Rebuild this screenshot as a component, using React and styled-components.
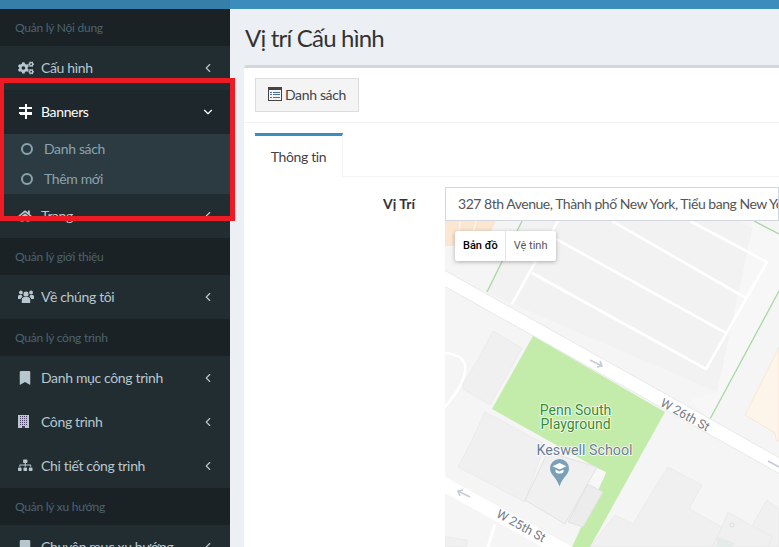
import React from 'react';
import styled, { createGlobalStyle } from 'styled-components';
import { FaCogs, FaHome, FaBookmark, FaSitemap } from 'react-icons/fa';
import { ChevronLeft, ChevronDown } from 'lucide-react';

// -----------------------------------------------------------------------------------------
// ---------------------------------------- Icons ------------------------------------------
// -----------------------------------------------------------------------------------------
const font = '"Lato", "Noto Sans", sans-serif';

const GlobalStyle = createGlobalStyle`
  html, body {
    margin: 0;
    width: 779px;
    height: 547px;
    overflow: hidden;
    font-family: ${font};
  }
  * {
    box-sizing: border-box;
  }
`;

const SignsIcon = () => (
  <svg width="15" height="15" viewBox="0 0 15 15" fill="currentColor" shapeRendering="crispEdges">
    <path d="M6.500 0h2v15h-2z" />
    <path d="M1 3h12l1.500 1-1.500 1H1z" />
    <path d="M14 8H2L.5 9 2 10.500h12z" />
  </svg>
);

const UsersIcon = () => (
  <svg width="16" height="13" viewBox="0 0 16 13" fill="currentColor">
    <circle cx="8" cy="4" r="2.600" />
    <path d="M3.800 13V9.500C3.800 8 5 7 6.300 7h3.400c1.300 0 2.500 1 2.500 2.500V13z" />
    <circle cx="2.900" cy="2.500" r="1.900" />
    <circle cx="13.100" cy="2.500" r="1.900" />
    <path d="M0 9V6.500C0 5.500.8 5 1.600 5h2.100c.1 .9.6 1.400 1 1.700C3.500 7.200 2.900 8 2.800 9z" />
    <path d="M16 9V6.500C16 5.500 15.200 5 14.400 5h-2.100c-.1 .9-.6 1.400-1 1.700 1.200 .5 1.800 1.300 1.900 2.300z" />
  </svg>
);

const BuildingIcon = () => (
  <svg width="11" height="13" viewBox="0 0 11 13" shapeRendering="crispEdges">
    <rect width="11" height="13" fill="currentColor" />
    <g fill="#4a3f63">
      {[1, 3, 5, 7, 9].map((y) =>
        [2, 4, 6, 8].map((x) => <rect key={`${x}-${y}`} x={x} y={y} width="1" height="1" />)
      )}
      <rect x="4" y="10.500" width="3" height="2.500" />
    </g>
  </svg>
);

const ListIcon = () => (
  <svg width="14" height="14" viewBox="0 0 14 14" fill="none" shapeRendering="crispEdges">
    <rect x="0.500" y="0.500" width="13" height="13" stroke="#444" />
    <path d="M1 1h12v2H1z" fill="#444" />
    <path d="M2 5h2M5 5h7M2 7.500h2M5 7.500h7M2 10h2M5 10h7" stroke="#4d6f9c" />
  </svg>
);

const MapArt = () => (
  <MapSvg viewBox="445 221 334 326">
    <rect x="445" y="221" width="334" height="326" fill="#f5f5f5" />

    {/* parcels north of 26th */}
    <polygon points="522,221 739,221 779,243 779,283 717,392 487,293" fill="#f2f2f2" />
    <polygon points="754,221 779,234 779,291 710,419 690,400 717,392" fill="#f7f7f7" />
    <g fill="none" stroke="#fff" strokeWidth="2.600" strokeLinejoin="round">
      <path d="M690,221 L767,262 L706,369 L532,273" />
      <path d="M612,221 L746,298" />
      <path d="M556,239 L726,333" />
      <path d="M558,221 L512,304" />
    </g>
    <g fill="none" stroke="#a7d8a4" strokeWidth="1.300">
      <path d="M522,221 L487,292" />
      <path d="M754,221 L779,234" />
      <path d="M779,291 L710,419" />
    </g>

    {/* peach buildings */}
    <polygon points="445,221 496,221 486,240 470,246 445,246" fill="#fbe6d2" />
    <path d="M460,221 L458,246 M476,221 L470,246" stroke="#fff3e8" strokeWidth="1.500" />
    <polygon points="779,347 745,415 775,433 776,440 779,441" fill="#fdf4ea" stroke="#fae3cd" strokeWidth="0.800" />

    {/* roads */}
    <polygon points="445,270 779,457 779,474 445,287" fill="#e9e9e9" />
    <polygon points="445,271 779,458 779,473 445,286" fill="#fff" />
    <polygon points="445,477 620,573 620,590 445,493" fill="#fff" />
    <path d="M495,524 L488,547" stroke="#fff" strokeWidth="3" fill="none" />
    <path d="M445,353 C472,355 472,375 445,407" stroke="#fff" strokeWidth="2.500" fill="none" />

    {/* park */}
    <polygon points="533,336 665,412 590,547 572,547 606,473 492,409" fill="#c3ecab" />

    {/* buildings */}
    <g fill="#f0f0f0" stroke="#e8e8e8" strokeWidth="0.700">
      <polygon points="493,331 522,348 490,405 463,389 463,384 480,356" />
      <polygon points="485,412 545,444 525,502 458,467 470,444" />
      <polygon points="668,467 702,485 689,509 722,527 712,547 590,547 615,515 633,524 653,491" />
      <polygon points="767,500 779,509 779,547 745,547 755,520" />
      <polygon points="728,512 772,537 768,547 713,547 722,527" />
      <polygon points="445,537 467,540 467,547 445,547" />
    </g>
    <polygon points="595,467 606,472 596,488 586,483" fill="#f7f7f7" />
    <polygon points="548,452 597,467 565,524 525,500" fill="#f0f0f0" stroke="#dedede" strokeWidth="0.800" />
    <polygon points="588,484 603,492 583,527 568,522" fill="#ececec" stroke="#dedede" strokeWidth="0.800" />
    <polygon points="718,537 735,543 733,547 716,547" fill="#e5ebe8" />
    <circle cx="732" cy="525" r="2" fill="#f5f5f5" stroke="#cfcfcf" strokeWidth="0.600" />

    {/* one way arrows */}
    <g fill="none" stroke="#c6cbdb" strokeWidth="1.600">
      <path d="M590,360 L602,366 M597,367 L602,366 L600,361" />
      <path d="M768,461 L779,467" />
      <path d="M470,497 L458,491 M463,490 L458,491 L460,496" />
    </g>

    {/* labels */}
    <MapLabel x="575.500" y="415" $size={14} fill="#2e8b2e">Penn South</MapLabel>
    <MapLabel x="575.500" y="429" $size={14} fill="#2e8b2e">Playground</MapLabel>
    <MapLabel x="584.500" y="455" $size={14.300} fill="#6b7c93">Keswell School</MapLabel>
    <MapLabel x="685" y="419" $size={12.500} fill="#757b85" transform="rotate(29 685 415)">W 26th St</MapLabel>
    <MapLabel x="521" y="530" $size={12.500} fill="#757b85" transform="rotate(29 521 526)">W 25th St</MapLabel>

    {/* school pin */}
    <path d="M559.500,459 a9.500,9.500 0 0 1 9.500,9.500 c0,6 -6,8 -9.500,18 c-3.500,-10 -9.500,-12 -9.500,-18 a9.500,9.500 0 0 1 9.500,-9.500z" fill="#7aa0b8" />
    <path d="M559.500,463 l7,3.300 l-7,3.300 l-7,-3.300z M555.500,469.500 v2.500 c2,2 6,2 8,0 v-2.500 l-4,2z" fill="#fff" />
  </MapSvg>
);

// -----------------------------------------------------------------------------------------
// ---------------------------------------- Menu -------------------------------------------
// -----------------------------------------------------------------------------------------
const SECTIONS_AFTER = [
  {
    title: 'Quản lý giới thiệu',
    items: [{ icon: <UsersIcon />, label: 'Về chúng tôi' }],
  },
  {
    title: 'Quản lý công trình',
    items: [
      { icon: <FaBookmark />, label: 'Danh mục công trình' },
      { icon: <BuildingIcon />, label: 'Công trình' },
      { icon: <FaSitemap />, size: 14.5, label: 'Chi tiết công trình' },
    ],
  },
  {
    title: 'Quản lý xu hướng',
    items: [{ icon: <FaBookmark />, label: 'Chuyên mục xu hướng' }],
  },
];

const MenuItem = ({ icon, size, label }) => (
  <Item>
    <ItemIcon $size={size}>{icon}</ItemIcon>
    <span>{label}</span>
    <Chevron><ChevronLeft size={14} /></Chevron>
  </Item>
);

const Section = ({ title, items }) => (
  <>
    <SectionTitle>{title}</SectionTitle>
    {items.map((item) => <MenuItem key={item.label} {...item} />)}
  </>
);

const App = () => (
  <Page>
    <GlobalStyle />
    <TopBar>
      <TopBarLogo />
    </TopBar>
    <Body>
      <Sidebar>
        <SectionTitle>Quản lý Nội dung</SectionTitle>
        <MenuItem icon={<FaCogs />} size={16} label="Cấu hình" />
        <Item $active>
          <ItemIcon><SignsIcon /></ItemIcon>
          <span>Banners</span>
          <Chevron><ChevronDown size={14} /></Chevron>
        </Item>
        <SubMenu>
          <SubItem><Ring /><span>Danh sách</span></SubItem>
          <SubItem><Ring /><span>Thêm mới</span></SubItem>
        </SubMenu>
        <MenuItem icon={<FaHome />} label="Trang" />
        {SECTIONS_AFTER.map((s) => <Section key={s.title} {...s} />)}
      </Sidebar>
      <Content>
        <Title>Vị trí Cấu hình</Title>
        <Box>
          <BoxHeader>
            <ListButton><ListIcon />Danh sách</ListButton>
          </BoxHeader>
          <BoxBody>
            <Tabs>
              <Tab>Thông tin</Tab>
            </Tabs>
            <FormRow>
              <Label>Vị Trí</Label>
              <Field>
                <AddressInput>327 8th Avenue, Thành phố New York, Tiểu bang New York, Hoa Kỳ</AddressInput>
                <MapFrame>
                  <MapArt />
                  <MapType>
                    <MapTypeButton $on>Bản đồ</MapTypeButton>
                    <MapTypeButton>Vệ tinh</MapTypeButton>
                  </MapType>
                </MapFrame>
              </Field>
            </FormRow>
          </BoxBody>
        </Box>
      </Content>
    </Body>
    <Highlight />
  </Page>
);

// -----------------------------------------------------------------------------------------
// ---------------------------------- Styled Components ------------------------------------
// -----------------------------------------------------------------------------------------
const sidebarWidth = '230px';
const tightText = 'letter-spacing: -0.35px;';

const Page = styled.div`
  position: relative;
  width: 779px;
  height: 547px;
  overflow: hidden;
  background: #ecf0f5;
  display: flex;
  flex-direction: column;
`;

const TopBar = styled.div`
  flex: none;
  height: 9px;
  background: #3c8dbc;
`;

const TopBarLogo = styled.div`
  width: ${sidebarWidth};
  height: 100%;
  background: #367fa9;
`;

const Body = styled.div`
  flex: 1;
  display: flex;
  min-height: 0;
`;

const Sidebar = styled.nav`
  flex: none;
  width: ${sidebarWidth};
  background: #222d32;
  overflow: hidden;
`;

const SectionTitle = styled.div`
  height: 37px;
  padding-left: 15px;
  background: #1a2226;
  color: #4b646f;
  font-size: 12px;
  line-height: 37px;
  letter-spacing: -0.25px;
`;

const Item = styled.div`
  height: 44px;
  display: flex;
  align-items: center;
  padding: 0 15px 2px 18px;
  font-size: 14px;
  ${tightText}
  color: ${(p) => (p.$active ? '#fff' : '#b8c7ce')};
  background: ${(p) => (p.$active ? '#1e282c' : 'transparent')};
`;

const ItemIcon = styled.span`
  width: 23px;
  margin-top: 1px;
  display: flex;
  align-items: center;
  font-size: ${(p) => p.$size || 14}px;
`;

const Chevron = styled.span`
  margin-left: auto;
  margin-top: 2px;
  display: flex;
`;

const SubMenu = styled.div`
  background: #2c3b41;
`;

const SubItem = styled.div`
  height: 30px;
  display: flex;
  align-items: center;
  gap: 11px;
  padding: 0 0 2px 21px;
  font-size: 14px;
  ${tightText}
  color: #8aa4af;
`;

const Ring = styled.span`
  flex: none;
  width: 12px;
  height: 12px;
  margin-top: 2px;
  border: 2px solid #8aa4af;
  border-radius: 50%;
`;

const Content = styled.main`
  flex: 1;
  min-width: 0;
  padding: 14px 0 0 14px;
  display: flex;
  flex-direction: column;
`;

const Title = styled.h1`
  margin: 0 0 0 1px;
  height: 42px;
  font-size: 24px;
  line-height: 29px;
  font-weight: 400;
  letter-spacing: -0.8px;
  color: #333;
`;

const Box = styled.section`
  flex: 1;
  width: 600px;
  background: #fff;
  border-top: 3px solid #d2d6de;
  border-top-left-radius: 3px;
`;

const BoxHeader = styled.div`
  height: 55px;
  padding: 10px 11px;
  border-bottom: 1px solid #f4f4f4;
`;

const ListButton = styled.div`
  width: 104px;
  height: 34px;
  padding-bottom: 2px;
  display: flex;
  align-items: center;
  justify-content: center;
  gap: 3px;
  background: #f4f4f4;
  border: 1px solid #ddd;
  color: #444;
  font-size: 14px;
  ${tightText}
`;

const BoxBody = styled.div`
  padding: 10px 0 0 11px;
`;

const Tabs = styled.div`
  height: 44px;
  border-bottom: 1px solid #f4f4f4;
`;

const Tab = styled.div`
  width: 88px;
  height: 44px;
  border-top: 3px solid #3c8dbc;
  border-right: 1px solid #f4f4f4;
  background: #fff;
  text-align: center;
  color: #444;
  font-size: 14px;
  line-height: 41px;
  ${tightText}
`;

const FormRow = styled.div`
  display: flex;
  margin-top: 10px;
`;

const Label = styled.div`
  flex: none;
  width: 160px;
  padding-top: 8px;
  text-align: right;
  font-size: 14px;
  font-weight: 700;
  color: #333;
`;

const Field = styled.div`
  flex: none;
  width: 334px;
  margin-left: 30px;
`;

const AddressInput = styled.div`
  height: 34px;
  padding: 0 12px;
  border: 1px solid #d2d6de;
  font-size: 14px;
  line-height: 31px;
  color: #555;
  white-space: nowrap;
  overflow: hidden;
  letter-spacing: -0.47px;
`;

const MapFrame = styled.div`
  position: relative;
  height: 326px;
`;

const MapSvg = styled.svg`
  display: block;
  width: 334px;
  height: 326px;
`;

const MapLabel = styled.text`
  font-family: "Roboto", sans-serif;
  font-size: ${(p) => p.$size}px;
  text-anchor: middle;
  paint-order: stroke;
  stroke: #fff;
  stroke-width: 1.5px;
`;

const MapType = styled.div`
  position: absolute;
  top: 10px;
  left: 10px;
  display: flex;
  background: #fff;
  border-radius: 2px;
  box-shadow: 0 1px 4px rgba(0, 0, 0, 0.3);
`;

const MapTypeButton = styled.div`
  height: 30px;
  padding: ${(p) => (p.$on ? '0 7px 0 8px' : '0 8px')};
  font-family: "Roboto", sans-serif;
  font-size: 11px;
  line-height: 30px;
  color: ${(p) => (p.$on ? '#000' : '#565656')};
  font-weight: ${(p) => (p.$on ? 500 : 400)};
  border-right: ${(p) => (p.$on ? '1px solid #e6e6e6' : 'none')};
`;

const Highlight = styled.div`
  position: absolute;
  left: 0;
  top: 78px;
  width: 235px;
  height: 143px;
  border: 5px solid #ed1c24;
  border-left-width: 4px;
  pointer-events: none;
`;

export default App;
